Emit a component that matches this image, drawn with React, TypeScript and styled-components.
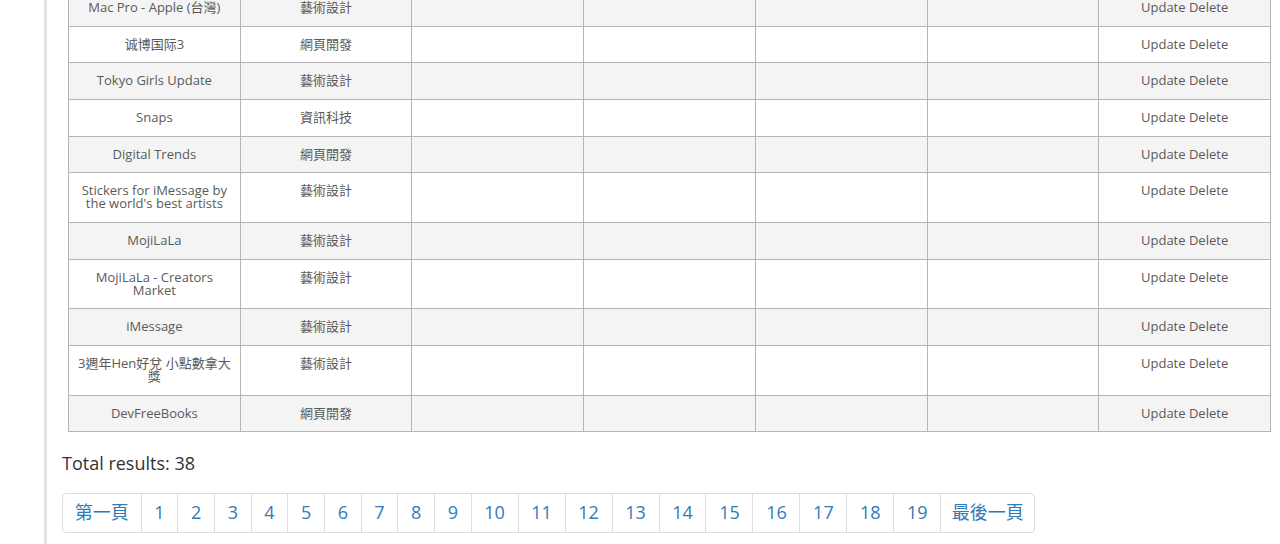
import styled, { createGlobalStyle } from "styled-components";

const rows = [
    { name: "Mac Pro - Apple (台灣)", category: "藝術設計" },
    { name: "诚博国际3", category: "網頁開發" },
    { name: "Tokyo Girls Update", category: "藝術設計" },
    { name: "Snaps", category: "資訊科技" },
    { name: "Digital Trends", category: "網頁開發" },
    { name: "Stickers for iMessage by the world's best artists", category: "藝術設計" },
    { name: "MojiLaLa", category: "藝術設計" },
    { name: "MojiLaLa - Creators Market", category: "藝術設計" },
    { name: "iMessage", category: "藝術設計" },
    { name: "3週年Hen好兌 小點數拿大獎", category: "藝術設計" },
    { name: "DevFreeBooks", category: "網頁開發" },
];

const pages = Array.from({ length: 19 }, (_, i) => String(i + 1));

export default function App() {
    return (
        <>
            <GlobalStyle />
            <Layout>
                <Sidebar />
                <Main>
                    <Table>
                        <tbody>
                            {rows.map((row, i) => (
                                <Row key={row.name} striped={i % 2 === 0}>
                                    <Cell>
                                        <Name>{row.name}</Name>
                                    </Cell>
                                    <Cell>{row.category}</Cell>
                                    <Cell />
                                    <Cell />
                                    <Cell />
                                    <Cell />
                                    <Cell>Update Delete</Cell>
                                </Row>
                            ))}
                        </tbody>
                    </Table>

                    <Total>Total results: 38</Total>

                    <Pagination>
                        <PageLink href="#" wide>第一頁</PageLink>
                        {pages.map((p) => (
                            <PageLink key={p} href="#">{p}</PageLink>
                        ))}
                        <PageLink href="#" wide>最後一頁</PageLink>
                    </Pagination>
                </Main>
            </Layout>
        </>
    );
}

const GlobalStyle = createGlobalStyle`
    html, body {
        margin: 0;
        padding: 0;
        background: #fff;
        overflow: hidden;
    }
    body {
        font-family: "Open Sans", "Noto Sans CJK TC", sans-serif;
        color: #333;
    }
`;

const Layout = styled.div`
    display: flex;
    height: 544px;
    overflow: hidden;
`;

const Sidebar = styled.aside`
    width: 44px;
    flex-shrink: 0;
    border-right: 3px solid #e4e4e4;
`;

const Main = styled.main`
    flex: 1;
    padding-left: 15px;
    margin-top: -11px;
`;

const Table = styled.table`
    border-collapse: collapse;
    table-layout: fixed;
    width: 1203px;
    margin-left: 6px;
`;

const Row = styled.tr<{ striped?: boolean }>`
    background-color: ${({ striped }) => (striped ? "#f4f4f4" : "#fff")};
`;

const Cell = styled.td`
    border: 1px solid #b4b4b4;
    padding: 8px 8px 8.67px;
    font-size: 13px;
    line-height: 19px;
    color: #5a5a5a;
    text-align: center;
    vertical-align: top;
`;

const Name = styled.div`
    line-height: 13px;
    padding: 3px 0;
`;

const Total = styled.div`
    font-size: 18px;
    line-height: 26px;
    margin-top: 18px;
    color: #333;
`;

const Pagination = styled.nav`
    display: inline-flex;
    margin-top: 17px;
`;

const PageLink = styled.a<{ wide?: boolean }>`
    padding: ${({ wide }) => (wide ? "6px 11.8px" : "6px 12.7px")};
    font-size: 18px;
    line-height: 25.7px;
    color: #337ab7;
    text-decoration: none;
    background: #fff;
    border: 1px solid #ddd;
    margin-left: -1px;

    &:first-child {
        margin-left: 0;
        border-radius: 4px 0 0 4px;
    }

    &:last-child {
        padding: 6px 10.5px;
        border-radius: 0 4px 4px 0;
    }
`;
